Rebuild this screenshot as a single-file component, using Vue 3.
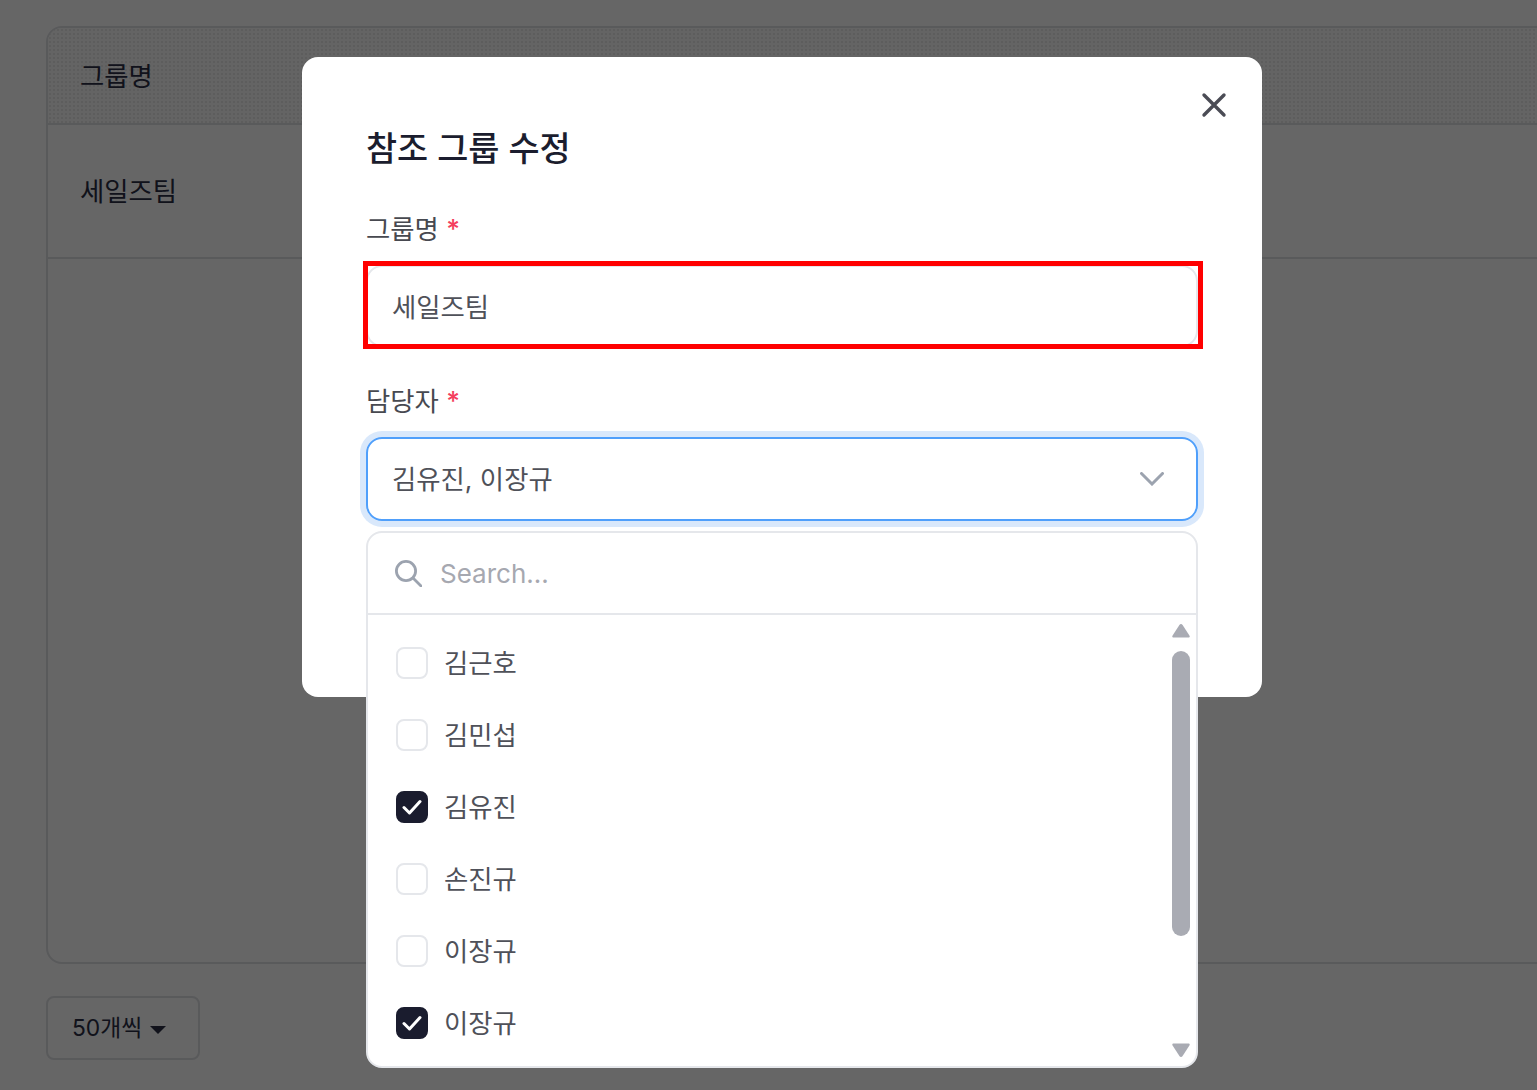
<script setup>
const options = [
  { name: '김근호', checked: false },
  { name: '김민섭', checked: false },
  { name: '김유진', checked: true },
  { name: '손진규', checked: false },
  { name: '이장규', checked: false },
  { name: '이장규', checked: true },
]
</script>

<template>
  <div class="page">
    <div class="table">
      <div class="thead">그룹명</div>
      <div class="row">세일즈팀</div>
    </div>
    <button class="size-btn">50개씩<span class="caret"></span></button>

    <div class="overlay">
      <div class="modal">
        <svg class="close" width="28" height="28" viewBox="0 0 28 28" fill="none" stroke="#4b4c55" stroke-width="3.4" stroke-linecap="round">
          <path d="M4 4 24 24M24 4 4 24" />
        </svg>
        <h2 class="title">참조 그룹 수정</h2>

        <label class="label first">그룹명 <span class="req">*</span></label>
        <div class="input-wrap">
          <div class="input">세일즈팀</div>
          <div class="highlight"></div>
        </div>

        <label class="label second">담당자 <span class="req">*</span></label>
        <div class="select-wrap">
          <div class="select">
            <span class="value">김유진, 이장규</span>
            <svg width="24" height="14" viewBox="0 0 24 14" fill="none" stroke="#9ca3af" stroke-width="3" stroke-linecap="round" stroke-linejoin="miter">
              <path d="M1.5 1.5 12 12 22.5 1.5" />
            </svg>
          </div>

          <div class="menu">
            <div class="search">
              <svg width="28" height="28" viewBox="0 0 28 28" fill="none" stroke="#9ca3af" stroke-width="2.8" stroke-linecap="round">
                <circle cx="12" cy="12" r="9.6" />
                <path d="M19 19 27 27" />
              </svg>
              <span class="placeholder">Search...</span>
            </div>
            <div class="list">
              <div v-for="(o, i) in options" :key="i" class="option">
                <span class="box" :class="{ on: o.checked }">
                  <svg v-if="o.checked" width="20" height="16" viewBox="0 0 20 16" fill="none" stroke="#fff" stroke-width="3" stroke-linecap="round" stroke-linejoin="round">
                    <path d="M2 8.5 7.5 14 18 2.5" />
                  </svg>
                </span>
                <span class="name">{{ o.name }}</span>
              </div>
              <div class="scrollbar">
                <svg class="arrow" width="18" height="14" viewBox="0 0 18 14" fill="#a9abb3">
                  <path d="M7.4 1 .6 11.4C-.1 12.6.4 13.5 1.6 13.5H16.4C17.6 13.5 18.1 12.6 17.4 11.4L10.6 1C9.8-.2 8.2-.2 7.4 1Z" />
                </svg>
                <span class="thumb"></span>
                <svg class="arrow down" width="18" height="14" viewBox="0 0 18 14" fill="#a9abb3">
                  <path d="M7.4 13 .6 2.6C-.1 1.4.4.5 1.6.5H16.4C17.6.5 18.1 1.4 17.4 2.6L10.6 13C9.8 14.2 8.2 14.2 7.4 13Z" />
                </svg>
              </div>
            </div>
          </div>
        </div>
      </div>
    </div>
  </div>
</template>

<style>
html, body { margin: 0; background: #fff; overflow: hidden; }
</style>

<style scoped>
.page {
  position: relative;
  height: 1090px;
  width: 1537px;
  overflow: hidden;
  box-sizing: border-box;
  padding: 26px 0 0 46px;
  background: #fff;
  font-family: Inter, "Noto Sans CJK KR", sans-serif;
  color: #2b2e45;
}
.table {
  width: 1560px;
  height: 938px;
  box-sizing: border-box;
  border: 2px solid #dfe0e4;
  border-radius: 16px;
  overflow: hidden;
}
.thead {
  height: 97px;
  box-sizing: border-box;
  padding: 0 0 3px 32px;
  display: flex;
  align-items: center;
  font-size: 26.4px;
  background-color: #fbfbfb;
  background-image: radial-gradient(#e8e8e8 0.8px, transparent 0.9px);
  background-size: 4px 4px;
  border-bottom: 2px solid #dfe0e4;
}
.row {
  height: 134px;
  box-sizing: border-box;
  padding: 0 0 3px 32px;
  display: flex;
  align-items: center;
  font-size: 26.4px;
  border-bottom: 2px solid #dfe0e4;
}
.size-btn {
  margin-top: 32px;
  width: 154px;
  height: 64px;
  box-sizing: border-box;
  padding: 0 0 3px 24px;
  display: flex;
  align-items: center;
  gap: 8px;
  border: 2px solid #dfe0e4;
  border-radius: 8px;
  background: #fff;
  color: #2b2e45;
  font: inherit;
  font-size: 22.8px;
}
.caret {
  width: 0;
  height: 0;
  margin-top: 7px;
  border-left: 8px solid transparent;
  border-right: 8px solid transparent;
  border-top: 8px solid #2b2e45;
}
.overlay {
  position: absolute;
  inset: 0;
  background: rgba(0, 0, 0, 0.6);
}
.modal {
  position: absolute;
  left: 302px;
  top: 57px;
  width: 960px;
  height: 640px;
  box-sizing: border-box;
  padding: 64px 64px 0;
  background: #fff;
  border-radius: 16px;
}
.close {
  position: absolute;
  right: 34px;
  top: 34px;
}
.title {
  margin: 0;
  height: 54px;
  line-height: 56px;
  font-size: 33.8px;
  font-weight: 500;
  color: #1b1d2e;
}
.label {
  display: block;
  height: 36px;
  line-height: 34px;
  font-size: 26.4px;
  color: #474950;
}
.label.first { margin-top: 37px; }
.label.second { margin-top: 37px; }
.req { color: #f43f5e; font-weight: 500; }
.input-wrap {
  position: relative;
  margin-top: 17px;
}
.input {
  height: 82px;
  box-sizing: border-box;
  padding: 0 0 2px 24px;
  display: flex;
  align-items: center;
  border: 2px solid #e5e7eb;
  border-radius: 16px;
  font-size: 26.4px;
  color: #4f5159;
}
.highlight {
  position: absolute;
  left: -3px;
  right: -5px;
  top: -4px;
  bottom: -2px;
  border: 5px solid #ff0000;
}
.select-wrap {
  position: relative;
  margin-top: 17px;
}
.select {
  height: 84px;
  box-sizing: border-box;
  padding: 0 32px 0 24px;
  display: flex;
  align-items: center;
  justify-content: space-between;
  border: 2px solid #4f9ffb;
  border-radius: 16px;
  box-shadow: 0 0 0 6px #d9e8fb;
  font-size: 26.4px;
  color: #4f5159;
}
.value { margin-bottom: 4px; }
.menu {
  position: absolute;
  left: 0;
  right: 0;
  top: 94px;
  height: 537px;
  box-sizing: border-box;
  border: 2px solid #e5e7eb;
  border-radius: 16px;
  background: #fff;
  overflow: hidden;
}
.search {
  height: 82px;
  box-sizing: border-box;
  padding: 0 0 0 26px;
  display: flex;
  align-items: center;
  gap: 18px;
  border-bottom: 2px solid #e5e7eb;
  font-size: 26px;
}
.placeholder { color: #a6a8b0; }
.list {
  position: relative;
  padding-top: 12px;
}
.option {
  height: 72px;
  padding-left: 28px;
  display: flex;
  align-items: center;
  gap: 16px;
  font-size: 26.4px;
  color: #4f5159;
}
.name { margin-bottom: 4px; }
.box {
  width: 32px;
  height: 32px;
  box-sizing: border-box;
  display: flex;
  align-items: center;
  justify-content: center;
  border: 2px solid #e5e7eb;
  border-radius: 8px;
}
.box.on {
  background: #1a1c2e;
  border-color: #1a1c2e;
}
.scrollbar {
  position: absolute;
  right: 6px;
  top: 9px;
  width: 18px;
  height: 436px;
  display: flex;
  flex-direction: column;
  align-items: center;
}
.thumb {
  flex: none;
  width: 18px;
  height: 285px;
  margin-top: 13px;
  border-radius: 9px;
  background: #a9abb3;
}
.arrow { flex: none; }
.arrow.down { margin-top: 107px; }
</style>
